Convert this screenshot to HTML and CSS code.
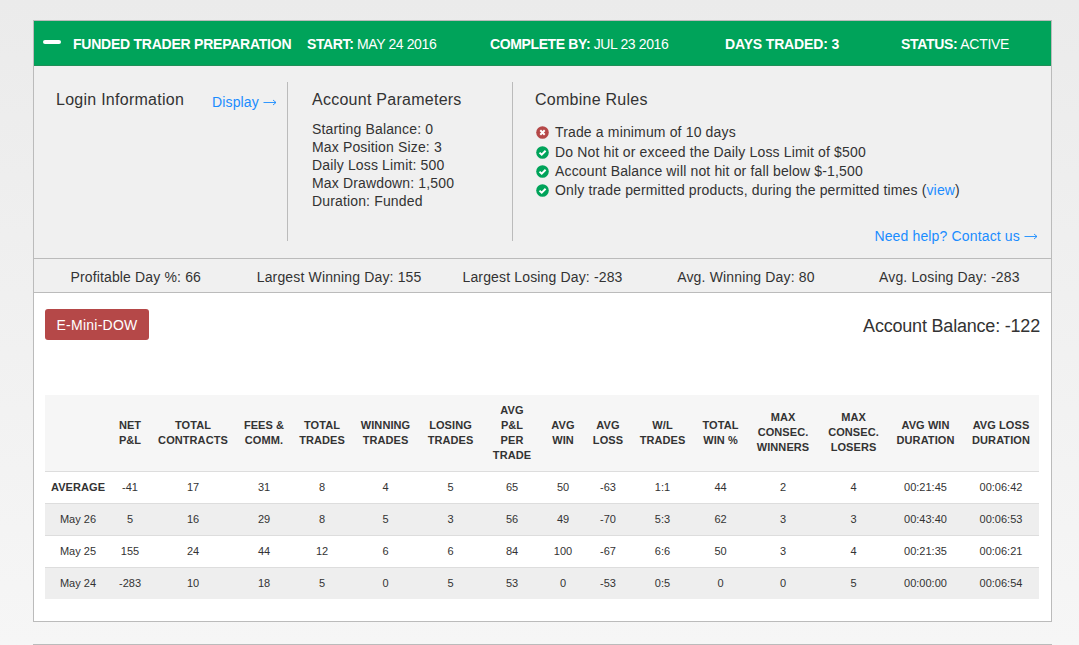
FILE: index.html
```html
<!DOCTYPE html>
<html lang="en">
<head>
    <meta charset="UTF-8">
    <meta name="viewport" content="width=device-width, initial-scale=1.0">
    <title>Funded Trader Preparation</title>
    <link rel="stylesheet" href="styles.css">
</head>
<body>
    <svg class="sprite" width="0" height="0">
        <symbol id="icon-check" viewBox="0 0 13 13">
            <circle cx="6.5" cy="6.5" r="6.3" fill="#00a35a"/>
            <path d="M3.5 6.6l2.2 2.1 3.9-3.9" fill="none" stroke="#fff" stroke-width="2"/>
        </symbol>
        <symbol id="icon-cross" viewBox="0 0 13 13">
            <circle cx="6.5" cy="6.5" r="6.3" fill="#b54848"/>
            <path d="M4.3 4.3l4.4 4.4M8.7 4.3l-4.4 4.4" fill="none" stroke="#fff" stroke-width="2"/>
        </symbol>
        <symbol id="icon-arrow" viewBox="0 0 14 7">
            <path d="M0.5 3.5h12.5M10 1l3 2.5-3 2.5" fill="none" stroke="#1a8cff" stroke-width="0.9"/>
        </symbol>
    </svg>

    <div class="panel">
        <div class="panel-header">
            <span class="toggle"></span>
            <span class="title"><b>FUNDED TRADER PREPARATION</b></span>
            <span class="start"><b>START:</b> MAY 24 2016</span>
            <span class="complete"><b>COMPLETE BY:</b> JUL 23 2016</span>
            <span class="days"><b>DAYS TRADED: 3</b></span>
            <span class="status"><b>STATUS:</b> ACTIVE</span>
        </div>

        <div class="info">
            <div class="login">
                <h2>Login Information</h2>
                <a href="#">Display <svg class="arrow"><use href="#icon-arrow"/></svg></a>
            </div>
            <div class="params">
                <h2>Account Parameters</h2>
                <ul>
                    <li>Starting Balance: 0</li>
                    <li>Max Position Size: 3</li>
                    <li>Daily Loss Limit: 500</li>
                    <li>Max Drawdown: 1,500</li>
                    <li>Duration: Funded</li>
                </ul>
            </div>
            <div class="rules">
                <h2>Combine Rules</h2>
                <ul>
                    <li><svg class="icon"><use href="#icon-cross"/></svg><span>Trade a minimum of 10 days</span></li>
                    <li><svg class="icon"><use href="#icon-check"/></svg><span>Do Not hit or exceed the Daily Loss Limit of $500</span></li>
                    <li><svg class="icon"><use href="#icon-check"/></svg><span>Account Balance will not hit or fall below $-1,500</span></li>
                    <li><svg class="icon"><use href="#icon-check"/></svg><span>Only trade permitted products, during the permitted times (<a href="#">view</a>)</span></li>
                </ul>
                <a class="help" href="#">Need help? Contact us <svg class="arrow"><use href="#icon-arrow"/></svg></a>
            </div>
        </div>

        <div class="stats">
            <span>Profitable Day %: 66</span>
            <span>Largest Winning Day: 155</span>
            <span>Largest Losing Day: -283</span>
            <span>Avg. Winning Day: 80</span>
            <span>Avg. Losing Day: -283</span>
        </div>

        <div class="results">
            <div class="results-top">
                <button class="btn">E-Mini-DOW</button>
                <span class="balance">Account Balance: -122</span>
            </div>
            <table>
                <colgroup>
                    <col class="w66"><col class="w38"><col class="w88"><col class="w54">
                    <col class="w62"><col class="w65"><col class="w65"><col class="w58">
                    <col class="w44"><col class="w46"><col class="w63"><col class="w53">
                    <col class="w72"><col class="w69"><col class="w75"><col class="w76">
                </colgroup>
                <thead>
                    <tr>
                        <th></th>
                        <th>NET<br>P&amp;L</th>
                        <th>TOTAL<br>CONTRACTS</th>
                        <th>FEES &amp;<br>COMM.</th>
                        <th>TOTAL<br>TRADES</th>
                        <th>WINNING<br>TRADES</th>
                        <th>LOSING<br>TRADES</th>
                        <th>AVG<br>P&amp;L<br>PER<br>TRADE</th>
                        <th>AVG<br>WIN</th>
                        <th>AVG<br>LOSS</th>
                        <th>W/L<br>TRADES</th>
                        <th>TOTAL<br>WIN %</th>
                        <th class="consec">MAX<br>CONSEC.<br>WINNERS</th>
                        <th class="consec">MAX<br>CONSEC.<br>LOSERS</th>
                        <th>AVG WIN<br>DURATION</th>
                        <th>AVG LOSS<br>DURATION</th>
                    </tr>
                </thead>
                <tbody>
                    <tr>
                        <th>AVERAGE</th><td>-41</td><td>17</td><td>31</td><td>8</td><td>4</td><td>5</td><td>65</td>
                        <td>50</td><td>-63</td><td>1:1</td><td>44</td><td>2</td><td>4</td><td>00:21:45</td><td>00:06:42</td>
                    </tr>
                    <tr>
                        <td>May 26</td><td>5</td><td>16</td><td>29</td><td>8</td><td>5</td><td>3</td><td>56</td>
                        <td>49</td><td>-70</td><td>5:3</td><td>62</td><td>3</td><td>3</td><td>00:43:40</td><td>00:06:53</td>
                    </tr>
                    <tr>
                        <td>May 25</td><td>155</td><td>24</td><td>44</td><td>12</td><td>6</td><td>6</td><td>84</td>
                        <td>100</td><td>-67</td><td>6:6</td><td>50</td><td>3</td><td>4</td><td>00:21:35</td><td>00:06:21</td>
                    </tr>
                    <tr>
                        <td>May 24</td><td>-283</td><td>10</td><td>18</td><td>5</td><td>0</td><td>5</td><td>53</td>
                        <td>0</td><td>-53</td><td>0:5</td><td>0</td><td>0</td><td>5</td><td>00:00:00</td><td>00:06:54</td>
                    </tr>
                </tbody>
            </table>
        </div>
    </div>

    <div class="next-panel"></div>
</body>
</html>
```
FILE: styles.css
```css
* {
    box-sizing: border-box;
}
body {
    height: 645px;
    margin: 0;
    padding: 20px 27px 0 33px;
    font-family: Arial, "Liberation Sans", sans-serif;
    font-size: 14px;
    letter-spacing: 0.15px;
    color: #333;
    background: linear-gradient(#ebebeb, #f6f6f6);
}
h2 {
    margin: 0;
    font-size: 16px;
    font-weight: normal;
    line-height: 18px;
    letter-spacing: 0.26px;
}
ul {
    margin: 0;
    padding: 0;
    list-style: none;
}
a {
    color: #1a8cff;
    text-decoration: none;
}
.sprite {
    display: none;
}
.panel {
    height: 602px;
    border: 1px solid #bbb;
    background: #fff;
}
.next-panel {
    height: 1px;
    margin-top: 22px;
    background: #bbb;
}

/* green bar */
.panel-header {
    display: grid;
    grid-template-columns: 39px 234px 183px 235px 176px 1fr;
    align-items: center;
    height: 45px;
    padding-top: 2px;
    border-bottom: 1px solid #1f8f58;
    background: #00a35a;
    color: #fff;
    white-space: nowrap;
}
.title {
    letter-spacing: -0.24px;
}
.start, .complete {
    letter-spacing: -0.38px;
}
.days {
    letter-spacing: -0.15px;
}
.status {
    letter-spacing: -0.3px;
}
.toggle {
    width: 18px;
    height: 4px;
    margin: 0 0 4px 9px;
    border-radius: 2px;
    background: #fff;
}

/* account info */
.info {
    display: grid;
    grid-template-columns: 254px 225px 1fr;
    align-items: start;
    height: 193px;
    padding-top: 16px;
    border-bottom: 1px solid #bbb;
    background: #f0f0f0;
}
.login, .params {
    height: 159px;
    border-right: 1px solid #bbb;
}
.login {
    display: flex;
    justify-content: space-between;
    align-items: flex-start;
    padding: 9px 10px 0 22px;
}
.login a {
    margin-top: 3px;
    line-height: 16px;
}
.params {
    padding: 9px 0 0 24px;
}
.params ul {
    margin-top: 11px;
    line-height: 18px;
}
.rules {
    display: flex;
    flex-direction: column;
    padding: 9px 13px 0 22px;
}
.rules ul {
    margin-top: 13px;
    line-height: 19px;
}
.rules li {
    display: flex;
    align-items: center;
    gap: 6px;
}
.rules li:first-child {
    height: 20px;
    margin-bottom: 1px;
}
.icon {
    width: 13px;
    height: 13px;
    margin-left: 1px;
}
.arrow {
    width: 14px;
    height: 7px;
    vertical-align: 1px;
}
.help {
    align-self: flex-end;
    margin-top: 27px;
    line-height: 18px;
}

/* summary strip */
.stats {
    display: flex;
    justify-content: space-around;
    align-items: center;
    height: 34px;
    padding-top: 2px;
    border-bottom: 1px solid #bbb;
    background: #f0f0f0;
}
.stats span {
    width: 204px;
    text-align: center;
}

/* results */
.results {
    padding: 16px 11px 0;
}
.results-top {
    display: flex;
    justify-content: space-between;
    height: 86px;
}
.btn {
    width: 104px;
    height: 31px;
    padding: 0;
    border: none;
    border-radius: 3px;
    background: #b54848;
    color: #fff;
    font: inherit;
    letter-spacing: 0.25px;
}
.balance {
    font-size: 18px;
    line-height: 35px;
    letter-spacing: -0.2px;
}
table {
    width: 994px;
    table-layout: fixed;
    border-collapse: separate;
    border-spacing: 0;
    font-size: 11px;
    line-height: 15px;
    text-align: center;
}
th, td {
    height: 32px;
    padding: 0;
    border-top: 1px solid #ddd;
    white-space: nowrap;
}
th {
    letter-spacing: 0.08px;
}
td {
    letter-spacing: 0;
}
thead th {
    height: 76px;
    border-top: none;
    background: #f6f6f6;
}
thead .consec {
    padding-bottom: 2px;
}
tbody tr:nth-child(even) {
    background: #eee;
}
.w38 { width: 38px; }
.w44 { width: 44px; }
.w46 { width: 46px; }
.w53 { width: 53px; }
.w54 { width: 54px; }
.w58 { width: 58px; }
.w62 { width: 62px; }
.w63 { width: 63px; }
.w65 { width: 65px; }
.w66 { width: 66px; }
.w69 { width: 69px; }
.w72 { width: 72px; }
.w75 { width: 75px; }
.w76 { width: 76px; }
.w88 { width: 88px; }
```
